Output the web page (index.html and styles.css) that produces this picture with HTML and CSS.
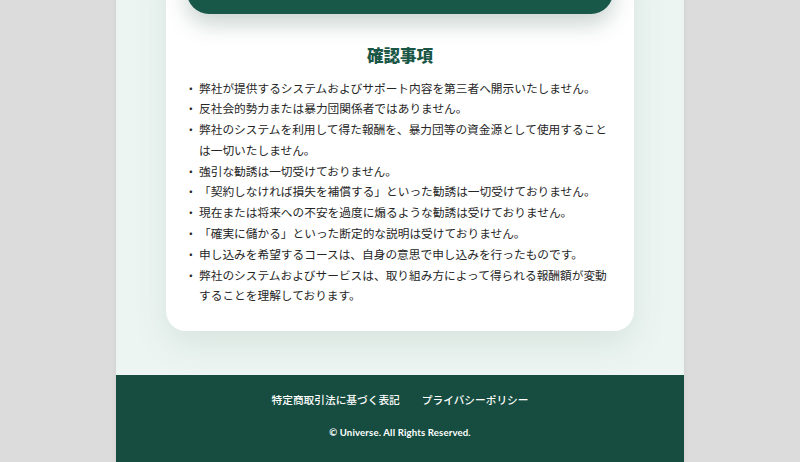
FILE: index.html
```html
<!DOCTYPE html>
<html lang="ja">
<head>
<meta charset="utf-8">
<title>確認事項</title>
<link rel="stylesheet" href="styles.css">
</head>
<body>
<div class="page">
  <main class="main">
    <section class="card">
      <div class="band"></div>
      <h2 class="title">確認事項</h2>
      <ul class="list">
        <li>弊社が提供するシステムおよびサポート内容を第三者へ開示いたしません。</li>
        <li>反社会的勢力または暴力団関係者ではありません。</li>
        <li>弊社のシステムを利用して得た報酬を、暴力団等の資金源として使用することは一切いたしません。</li>
        <li>強引な勧誘は一切受けておりません。</li>
        <li>「契約しなければ損失を補償する」といった勧誘は一切受けておりません。</li>
        <li>現在または将来への不安を過度に煽るような勧誘は受けておりません。</li>
        <li>「確実に儲かる」といった断定的な説明は受けておりません。</li>
        <li>申し込みを希望するコースは、自身の意思で申し込みを行ったものです。</li>
        <li>弊社のシステムおよびサービスは、取り組み方によって得られる報酬額が変動することを理解しております。</li>
      </ul>
    </section>
  </main>
  <footer class="footer">
    <nav class="links">
      <a href="#">特定商取引法に基づく表記</a>
      <a href="#">プライバシーポリシー</a>
    </nav>
    <p class="copy">© Universe. All Rights Reserved.</p>
  </footer>
</div>
</body>
</html>
```
FILE: styles.css
```css
html, body {
  margin: 0;
  padding: 0;
}
body {
  background: #dcdcdc;
  font-family: "Noto Sans CJK JP", "Noto Sans", sans-serif;
  overflow: hidden;
}
.page {
  width: 568px;
  margin: 0 auto;
  background: #edf5f2;
  box-shadow: 0 0 6px rgba(0, 0, 0, 0.06);
}
.main {
  padding: 0 50px 44px;
}
.card {
  background: #ffffff;
  border-radius: 0 0 20px 20px;
  padding: 0 21px 25px;
  box-shadow: 0 14px 34px rgba(30, 90, 70, 0.10);
}
.band {
  height: 60px;
  margin-top: -46px;
  background: #175848;
  border-radius: 0 0 22px 22px;
  box-shadow: 0 10px 22px rgba(10, 60, 45, 0.22);
}
.title {
  margin: 29px 0 0;
  text-align: center;
  font-size: 16.5px;
  line-height: 24px;
  font-weight: 900;
  color: #1a5646;
}
.list {
  list-style: none;
  margin: 10.5px 0 0;
  padding: 0;
  font-size: 11.7px;
  line-height: 20.8px;
  color: #262626;
}
.list li {
  display: flex;
}
.list li::before {
  content: "・";
  flex: 0 0 12px;
  margin-left: -2px;
  margin-right: 2px;
}
.footer {
  background: #164d40;
  padding: 17px 0 24px;
  color: #ffffff;
  text-align: center;
}
.links {
  display: flex;
  justify-content: center;
  gap: 22px;
  font-size: 10.7px;
  line-height: 16px;
  font-weight: 500;
}
.links a {
  color: #ffffff;
  text-decoration: none;
}
.copy {
  margin: 17.5px 0 0;
  font-family: "Lato", "Noto Sans", sans-serif;
  font-size: 9.6px;
  font-weight: 700;
  line-height: 14px;
  letter-spacing: 0.15px;
}
```
